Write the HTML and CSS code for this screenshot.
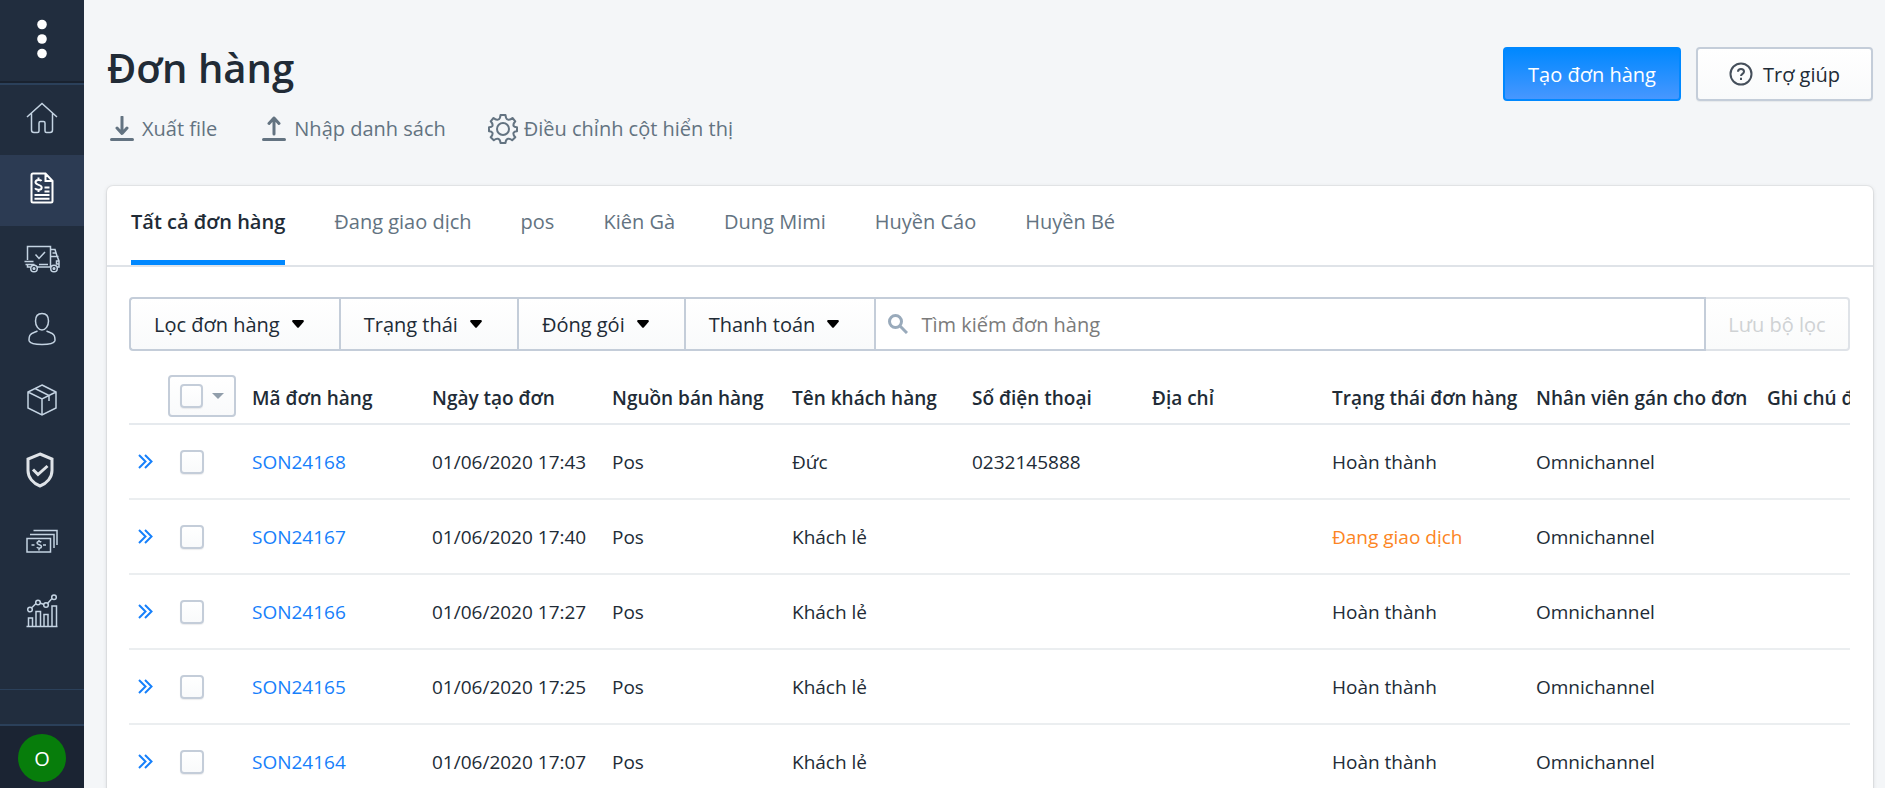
FILE: index.html
```html
<!DOCTYPE html>
<html lang="vi">
<head>
<meta charset="utf-8">
<meta name="viewport" content="width=device-width, initial-scale=1">
<title>Đơn hàng</title>
<link rel="stylesheet" href="styles.css">
</head>
<body>
<div class="app">
  <aside class="sidebar">
    <button class="menu" type="button" aria-label="Menu">
      <svg width="10" height="40" viewBox="0 0 10 40" fill="#fff"><circle cx="5" cy="5.500" r="4.800"/><circle cx="5" cy="20" r="4.800"/><circle cx="5" cy="34.500" r="4.800"/></svg>
    </button>
    <nav class="nav">
      <a class="nav-item" href="#" aria-label="Tổng quan">
        <svg width="32" height="32" viewBox="0 0 32 32"><path d="M1 15 16 1.500 31 15M5.500 11.500V28q0 2.500 2.500 2.500h3.500q1.500 0 1.500-1.500v-8q0-1.500 1.500-1.500h3q1.500 0 1.500 1.500v8q0 1.500 1.500 1.500H24q2.500 0 2.500-2.500V11.500"/></svg>
      </a>
      <a class="nav-item nav-item-active" href="#" aria-label="Đơn hàng">
        <svg width="24" height="32" viewBox="0 0 24 32"><path stroke-width="2" d="M3 1.500h12.500l7 7.500V29q0 1.500-1.500 1.500H3Q1.500 30.500 1.500 29V3Q1.500 1.500 3 1.500ZM15.500 1.500V9h7M14.500 15.500h5M14.500 19.500h5M4.500 23h15M4.500 26.800h15M11.500 9C10.500 7.500 5.500 7.500 5.500 10.300c0 3.200 6.200 1.900 6.200 5.200 0 3-5.200 3-6.700.800M8.500 5.500v2.300M8.500 17.500v2.500"/></svg>
      </a>
      <a class="nav-item" href="#" aria-label="Vận chuyển">
        <svg width="36" height="28" viewBox="0 0 36 28"><path d="M3.500 15V1.500h23V22M26.500 4.500h4.500l2 6.500M26.500 11.500h8M28.500 8h3.500M33 11l2 5v6h-2M34.500 16h-2v3h2M.500 16.500h9M1.500 19.500h9M3.500 19.500V22h3M13 22h14M15 19.500h9M11.500 9.500l3.500 4 6-6.500"/><circle cx="10" cy="23.500" r="3.300"/><circle cx="30" cy="23.500" r="3.300"/><circle cx="10" cy="23.500" r=".8"/><circle cx="30" cy="23.500" r=".8"/></svg>
      </a>
      <a class="nav-item" href="#" aria-label="Khách hàng">
        <svg width="28" height="34" viewBox="0 0 28 34"><path d="M14 1.500c4.500 0 6.500 3 6.500 7.500 0 5-3 9-6.500 9s-6.500-4-6.500-9c0-4.500 2-7.500 6.500-7.500ZM9.500 19C6 20.500 3 21 1.800 23.500 1 25.500 1 28 1.200 29 2 31 7 32.500 14 32.500S26 31 26.800 29c.200-1 .200-3.500-.6-5.500C25 21 22 20.500 18.500 19"/></svg>
      </a>
      <a class="nav-item" href="#" aria-label="Sản phẩm">
        <svg width="30" height="32" viewBox="0 0 30 32"><path d="M15 1 29 8v16l-14 7L1 24V8ZM1 8l14 7 14-7M15 15v16M8 4.500l14 7V17"/></svg>
      </a>
      <a class="nav-item nav-item-shield" href="#" aria-label="Bảo hành">
        <svg width="28" height="36" viewBox="0 0 28 36"><path d="M14 2 26 7v11.500C26 25.500 21 31.500 14 34 7 31.500 2 25.500 2 18.500V7ZM7 17.500l5 5 9.500-8.500"/></svg>
      </a>
      <a class="nav-item" href="#" aria-label="Sổ quỹ">
        <svg width="32" height="24" viewBox="0 0 32 24"><path d="M1 9.500h23.500V23H1ZM4 5.500h24V19M7.500 1.500H31V16M5.500 16h3M17 16h3M15.200 13.300c-1-1.300-4.200-1-4.200.800 0 2 4.500 1.400 4.500 3.500 0 2-3.500 2-4.700.500M13 11v2M13 19v2.500"/></svg>
      </a>
      <a class="nav-item" href="#" aria-label="Báo cáo">
        <svg width="32" height="34" viewBox="0 0 32 34"><path d="M.500 32.500h31M2.500 32V24h4v8M10 32V17.500h4.500V32M18 32V20.500h4V32M26 32V12h4.500V32M6 13.500l4-4M14 9l4 1.500M21.500 9.500l4.500-5"/><circle cx="4" cy="15.500" r="2.300"/><circle cx="12" cy="8.500" r="2.300"/><circle cx="20" cy="11" r="2.300"/><circle cx="28" cy="3.200" r="2.300"/></svg>
      </a>
    </nav>
    <div class="sidebar-strip"></div>
    <div class="account"><button class="avatar" type="button">O</button></div>
  </aside>

  <main class="main">
    <header class="page-head">
      <div class="head-left">
        <h1 class="title">Đơn hàng</h1>
        <div class="links">
          <a class="link" href="#">
            <svg class="link-icon" width="24" height="26" viewBox="0 0 24 26"><path d="M12 1v16M7 12l5 5.500 5-5.500"/><path d="M1.500 23.500h21"/></svg>Xuất file</a>
          <a class="link" href="#">
            <svg class="link-icon" width="24" height="26" viewBox="0 0 24 26"><path d="M12 18V2M7 7.500 12 2l5 5.500"/><path d="M1.500 23.500h21"/></svg>Nhập danh sách</a>
          <a class="link link-gear" href="#">
            <svg class="gear-icon" width="30" height="30" viewBox="0 0 30 30"><circle cx="15" cy="15" r="6"/><path d="M12.500 1h5q.200 4 2.500 4.600 2 .700 4.500-1.600l2.800 3.300q-2.500 2.700-1.700 4.700.700 1.300 3.400 1.300v4q-2.700.200-3.400 1.400-.800 2 1.700 4.600l-3.100 3q-2.500-2.200-4.300-1.500Q17.700 25.500 17.500 29h-5q-.200-3.500-2.400-4.200-1.800-.700-4.300 1.500l-3.100-3q2.500-2.600 1.700-4.600Q3.700 17.500 1 17.300v-4Q3.700 13.300 4.400 12 5.200 10 2.700 7.300L5.500 4q2.500 2.300 4.500 1.600Q12.300 5 12.500 1Z"/></svg>Điều chỉnh cột hiển thị</a>
        </div>
      </div>
      <div class="actions">
        <button class="btn btn-primary" type="button">Tạo đơn hàng</button>
        <button class="btn btn-help" type="button">
          <svg width="24" height="24" viewBox="0 0 24 24"><circle cx="12" cy="12" r="10.500"/><path d="M9 9.700C9 6 15 6 15 9.700c0 2-3 2.300-3 4.300M12 15.800V18"/></svg>Trợ giúp</button>
      </div>
    </header>

    <section class="card">
      <nav class="tabs">
        <a class="tab tab-active" href="#">Tất cả đơn hàng</a>
        <a class="tab" href="#">Đang giao dịch</a>
        <a class="tab" href="#">pos</a>
        <a class="tab" href="#">Kiên Gà</a>
        <a class="tab" href="#">Dung Mimi</a>
        <a class="tab" href="#">Huyền Cáo</a>
        <a class="tab" href="#">Huyền Bé</a>
      </nav>
      <div class="card-body">
        <div class="filters">
          <button class="filter filter-first" type="button">Lọc đơn hàng <svg class="caret" width="12" height="8" viewBox="0 0 12 8"><path d="M1 0h10q1.500.500.500 2L7 7.300q-1 1-2 0L.500 2Q-.500.500 1 0Z"/></svg></button>
          <button class="filter" type="button">Trạng thái <svg class="caret" width="12" height="8" viewBox="0 0 12 8"><path d="M1 0h10q1.500.500.500 2L7 7.300q-1 1-2 0L.500 2Q-.500.500 1 0Z"/></svg></button>
          <button class="filter" type="button">Đóng gói <svg class="caret" width="12" height="8" viewBox="0 0 12 8"><path d="M1 0h10q1.500.500.500 2L7 7.300q-1 1-2 0L.500 2Q-.500.500 1 0Z"/></svg></button>
          <button class="filter" type="button">Thanh toán <svg class="caret" width="12" height="8" viewBox="0 0 12 8"><path d="M1 0h10q1.500.500.500 2L7 7.300q-1 1-2 0L.500 2Q-.500.500 1 0Z"/></svg></button>
          <label class="search">
            <svg width="20" height="20" viewBox="0 0 20 20"><circle cx="7.500" cy="7.500" r="6"/><path d="m12 12 7 7"/></svg>
            <input class="search-input" type="text" placeholder="Tìm kiếm đơn hàng" aria-label="Tìm kiếm đơn hàng">
          </label>
          <button class="save" type="button" disabled>Lưu bộ lọc</button>
        </div>
        <div class="table-wrap">
          <table class="table">
            <colgroup><col class="col-expand"><col class="col-check"><col class="col"><col class="col"><col class="col"><col class="col"><col class="col"><col class="col"><col class="col-status"><col class="col-staff"><col class="col-note"></colgroup>
            <thead>
              <tr><th></th><th><div class="bulk"><input class="check" type="checkbox" aria-label="Chọn tất cả"><svg width="12" height="6" viewBox="0 0 12 6"><path fill="#919eab" d="M0 0h12L6 6Z"/></svg></div></th><th>Mã đơn hàng</th><th>Ngày tạo đơn</th><th>Nguồn bán hàng</th><th>Tên khách hàng</th><th>Số điện thoại</th><th>Địa chỉ</th><th>Trạng thái đơn hàng</th><th>Nhân viên gán cho đơn</th><th>Ghi chú đơn hàng</th></tr>
            </thead>
            <tbody>
              <tr><td><button class="expand" type="button" aria-label="Mở rộng"><svg width="15" height="15" viewBox="0 0 15 15"><path d="m1 1 6.500 6.500L1 14M7 1l6.500 6.500L7 14"/></svg></button></td><td class="cell-check"><input class="check" type="checkbox" aria-label="SON24168"></td><td><a class="order" href="#">SON24168</a></td><td>01/06/2020 17:43</td><td>Pos</td><td>Đức</td><td>0232145888</td><td></td><td>Hoàn thành</td><td>Omnichannel</td><td></td></tr>
              <tr><td><button class="expand" type="button" aria-label="Mở rộng"><svg width="15" height="15" viewBox="0 0 15 15"><path d="m1 1 6.500 6.500L1 14M7 1l6.500 6.500L7 14"/></svg></button></td><td class="cell-check"><input class="check" type="checkbox" aria-label="SON24167"></td><td><a class="order" href="#">SON24167</a></td><td>01/06/2020 17:40</td><td>Pos</td><td>Khách lẻ</td><td></td><td></td><td class="pending">Đang giao dịch</td><td>Omnichannel</td><td></td></tr>
              <tr><td><button class="expand" type="button" aria-label="Mở rộng"><svg width="15" height="15" viewBox="0 0 15 15"><path d="m1 1 6.500 6.500L1 14M7 1l6.500 6.500L7 14"/></svg></button></td><td class="cell-check"><input class="check" type="checkbox" aria-label="SON24166"></td><td><a class="order" href="#">SON24166</a></td><td>01/06/2020 17:27</td><td>Pos</td><td>Khách lẻ</td><td></td><td></td><td>Hoàn thành</td><td>Omnichannel</td><td></td></tr>
              <tr><td><button class="expand" type="button" aria-label="Mở rộng"><svg width="15" height="15" viewBox="0 0 15 15"><path d="m1 1 6.500 6.500L1 14M7 1l6.500 6.500L7 14"/></svg></button></td><td class="cell-check"><input class="check" type="checkbox" aria-label="SON24165"></td><td><a class="order" href="#">SON24165</a></td><td>01/06/2020 17:25</td><td>Pos</td><td>Khách lẻ</td><td></td><td></td><td>Hoàn thành</td><td>Omnichannel</td><td></td></tr>
              <tr><td><button class="expand" type="button" aria-label="Mở rộng"><svg width="15" height="15" viewBox="0 0 15 15"><path d="m1 1 6.500 6.500L1 14M7 1l6.500 6.500L7 14"/></svg></button></td><td class="cell-check"><input class="check" type="checkbox" aria-label="SON24164"></td><td><a class="order" href="#">SON24164</a></td><td>01/06/2020 17:07</td><td>Pos</td><td>Khách lẻ</td><td></td><td></td><td>Hoàn thành</td><td>Omnichannel</td><td></td></tr>
            </tbody>
          </table>
        </div>
      </div>
    </section>
  </main>
</div>
</body>
</html>
```
FILE: styles.css
```css
* { box-sizing: border-box; }

body {
  margin: 0;
  background: #f4f6f8;
  color: #212b36;
  font-family: "Open Sans", "Noto Sans", sans-serif;
  font-size: 20px;
}

a { text-decoration: none; color: inherit; }
button, input { font: inherit; color: inherit; }
button { cursor: pointer; }
svg { flex: none; fill: none; }

.app { display: flex; height: 100vh; overflow: hidden; }

/* Sidebar */
.sidebar {
  display: flex;
  flex: none;
  flex-direction: column;
  width: 84px;
  background: #212d3e;
}
.menu {
  display: flex;
  align-items: center;
  justify-content: center;
  height: 83px;
  padding: 0 0 4px;
  border: 0;
  border-bottom: 2px solid #19222f;
  background: none;
}
.menu svg { fill: #fff; }
.nav { flex: 1; border-top: 2px solid #2b405a; }
.nav-item {
  display: flex;
  align-items: center;
  justify-content: center;
  height: 70px;
  padding: 0 1px 5px 0;
  stroke: #c4d3e2;
  stroke-width: 1.5;
}
.nav-item:nth-child(even) { height: 71px; }
.nav-item-active { background: #2c3b53; stroke: #fff; }
.nav-item-shield { padding-right: 4px; stroke: #dfe3e8; stroke-width: 3; }
.sidebar-strip { height: 35px; border-top: 1px solid #2b405a; }
.account {
  display: flex;
  align-items: flex-start;
  justify-content: center;
  height: 64px;
  padding-top: 8px;
  border-top: 2px solid #2b405a;
  background: #1b2433;
}
.avatar {
  width: 48px;
  height: 48px;
  padding: 0;
  border: 0;
  border-radius: 50%;
  background: #077d0b;
  color: #fff;
}

/* Page header */
.main { flex: 1; min-width: 0; padding: 40px 12px 0 23px; }
.page-head { display: flex; justify-content: space-between; margin-bottom: 40px; }
.title { margin: 0; font-size: 40px; font-weight: 600; line-height: 56px; }
.links { display: flex; gap: 42px; margin-top: 16px; color: #637381; }
.link { display: flex; align-items: center; gap: 8px; padding-left: 3px; line-height: 34px; }
.link-icon { stroke: #637381; stroke-width: 3; stroke-linecap: round; stroke-linejoin: round; }
.link-gear { gap: 6px; padding-left: 0; }
.gear-icon { stroke: #637381; stroke-width: 2; stroke-linejoin: round; }
.actions { display: flex; align-items: flex-start; gap: 15px; padding-top: 7px; }
.btn {
  display: flex;
  align-items: center;
  justify-content: center;
  gap: 10px;
  height: 54px;
  padding: 0 22px;
  border: 2px solid #c4cdd9;
  border-radius: 4px;
  background: linear-gradient(#fff, #f9fafb);
}
.btn-primary {
  min-width: 178px;
  border-color: #0088ff;
  background: linear-gradient(#0088ff, #4797ff);
  color: #fff;
}
.btn-help { min-width: 177px; box-shadow: 0 1px 1px rgba(22, 29, 37, .06); }
.btn-help svg { stroke: #454f5b; stroke-width: 2; }

/* Card */
.card {
  min-height: 640px;
  border-radius: 6px;
  background: #fff;
  box-shadow: 0 0 0 1px rgba(63, 63, 68, .06), 0 1px 4px rgba(63, 63, 68, .18);
}
.tabs { display: flex; gap: 49px; padding: 0 24px; border-bottom: 2px solid #dfe3e8; color: #637381; }
.tab { height: 79px; padding-top: 21px; line-height: 30px; white-space: nowrap; }
.tab-active { border-bottom: 5px solid #0088ff; color: #212b36; font-weight: 600; }
.card-body { padding: 30px 23px 0 22px; }

/* Filters */
.filters { display: flex; height: 54px; }
.filter {
  display: flex;
  align-items: center;
  gap: 12px;
  padding: 0 35px 0 23px;
  border: 2px solid #c4cdd9;
  border-right: 0;
  background: linear-gradient(#fff, #f9fafb);
  white-space: nowrap;
}
.filter-first { border-radius: 4px 0 0 4px; }
.caret { fill: #000; }
.search {
  display: flex;
  flex: 1;
  align-items: center;
  min-width: 0;
  padding-left: 12px;
  border: 2px solid #c4cdd9;
}
.search svg { stroke: #99aabb; stroke-width: 3; }
.search-input { flex: 1; min-width: 0; height: 50px; padding: 0 13px; border: 0; outline: 0; background: none; }
.search-input::placeholder { color: #7b7b7b; opacity: 1; }
.save {
  width: 144px;
  padding: 0;
  border: 2px solid #dfe3e8;
  border-left: 0;
  border-radius: 0 4px 4px 0;
  background: linear-gradient(#fff, #fafbfb);
  color: #cfd2d4;
}

/* Orders table */
.table-wrap { overflow: hidden; }
.table { width: 1850px; border-collapse: collapse; table-layout: fixed; font-size: 19px; }
.col-expand { width: 39px; }
.col-check { width: 72px; }
.col { width: 180px; }
.col-status { width: 204px; }
.col-staff { width: 231px; }
.table th {
  height: 73px;
  padding: 22px 0 0 12px;
  border-bottom: 2px solid #e6eaee;
  font-weight: 600;
  text-align: left;
  white-space: nowrap;
}
.table th:nth-child(2) { padding: 17px 0 0; }
.table td { height: 75px; padding: 0 12px; border-bottom: 2px solid #ebeef0; }
.table td:first-child { padding: 0 0 0 9px; }
.bulk {
  display: flex;
  align-items: center;
  gap: 9px;
  width: 68px;
  height: 42px;
  padding: 0 10px;
  border: 2px solid #c4cdd9;
  border-radius: 4px;
  background: linear-gradient(#fff, #f9fafb);
}
.check {
  display: block;
  width: 24px;
  height: 24px;
  margin: 0;
  border: 2px solid #c4cdd9;
  border-radius: 4px;
  background: linear-gradient(#fff, #f9fafb);
  box-shadow: 0 1px 1px rgba(22, 29, 37, .08);
  appearance: none;
}
.expand { display: block; padding: 0; border: 0; background: none; }
.expand svg { display: block; stroke: #1680fb; stroke-width: 2; }
.order { color: #1680fb; }
.pending { color: #fc8523; }
```
